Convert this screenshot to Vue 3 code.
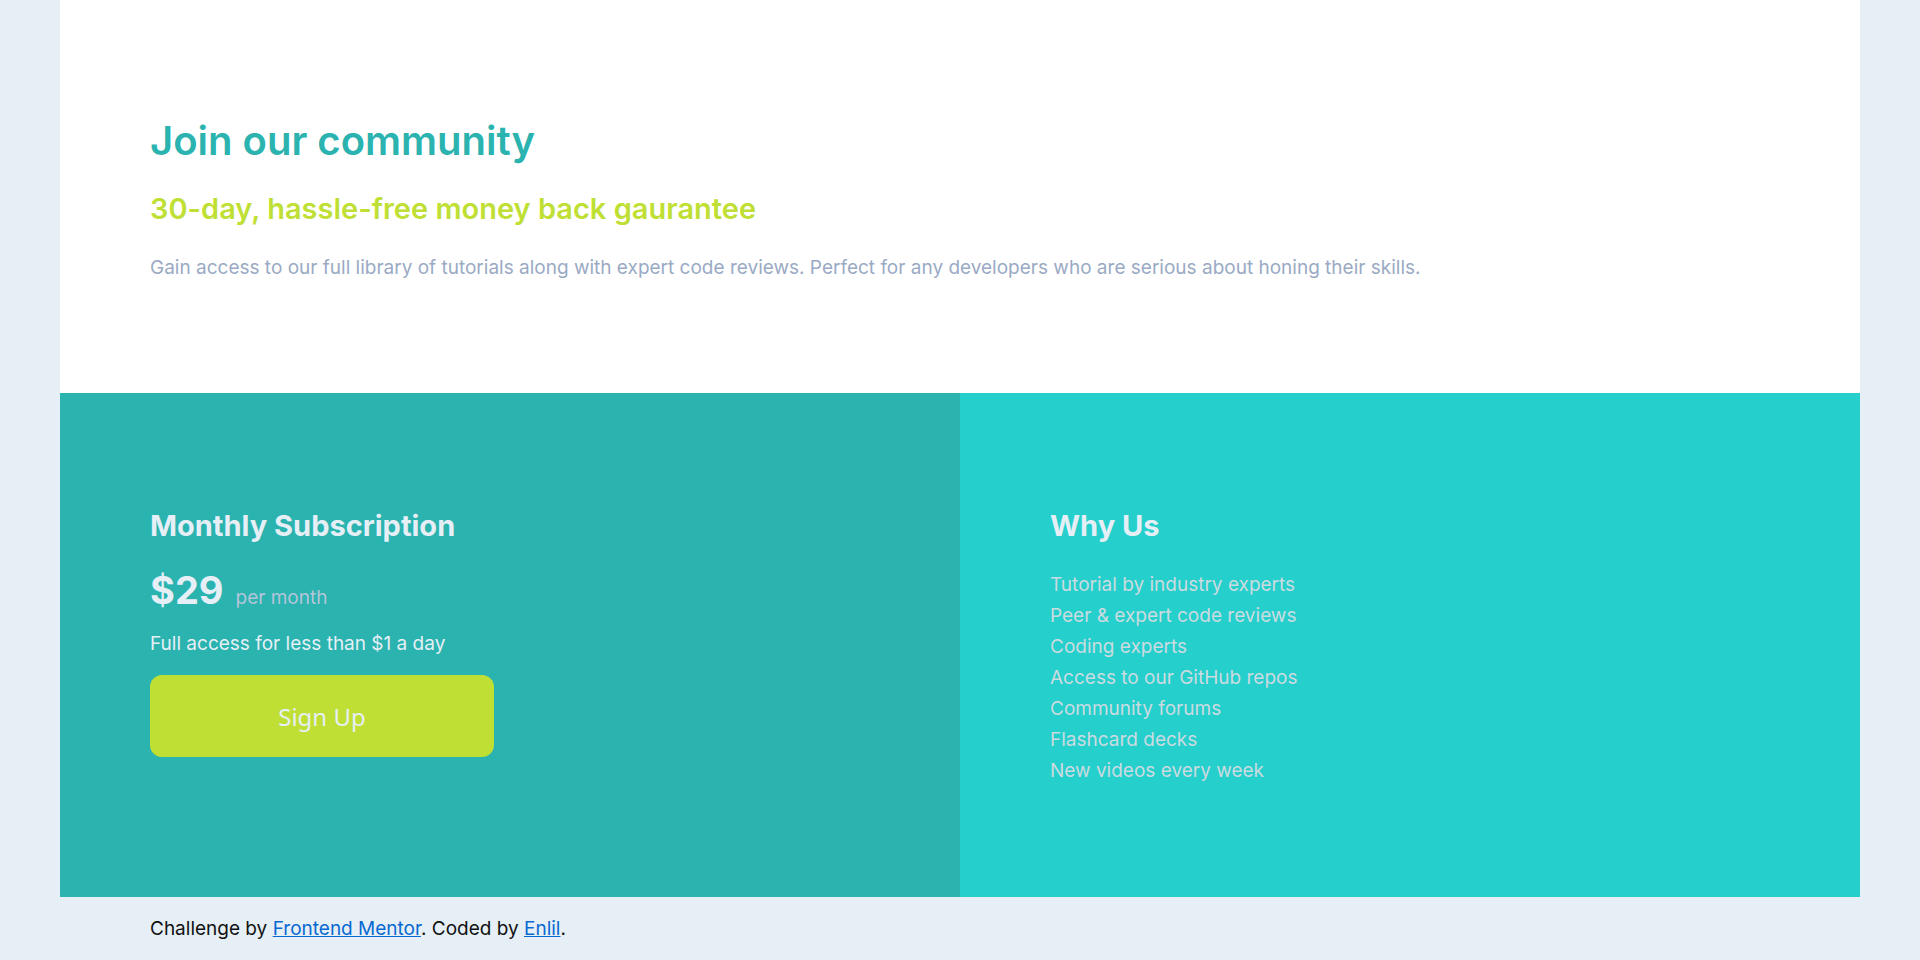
<script setup>
const reasons = [
  'Tutorial by industry experts',
  'Peer & expert code reviews',
  'Coding experts',
  'Access to our GitHub repos',
  'Community forums',
  'Flashcard decks',
  'New videos every week',
]
</script>

<template>
  <div class="page">
    <main>
      <section class="intro">
        <h1>Join our community</h1>
        <h2>30-day, hassle-free money back gaurantee</h2>
        <p>Gain access to our full library of tutorials along with expert code reviews. Perfect for any developers who are serious about honing their skills.</p>
      </section>
      <div class="panels">
        <section class="panel plan">
          <h2>Monthly Subscription</h2>
          <p class="price"><strong>$29</strong><span>per month</span></p>
          <p class="note">Full access for less than $1 a day</p>
          <button type="button">Sign Up</button>
        </section>
        <section class="panel why">
          <h2>Why Us</h2>
          <ul>
            <li v-for="reason in reasons" :key="reason">{{ reason }}</li>
          </ul>
        </section>
      </div>
    </main>
    <footer>
      Challenge by <a href="#frontend-mentor">Frontend Mentor</a>. Coded by <a href="#enlil">Enlil</a>.
    </footer>
  </div>
</template>

<style>
body {
  background: #e6eff5;
}
</style>

<style scoped>
.page {
  padding: 0 60px;
  font-family: Inter, "Liberation Sans", sans-serif;
  font-size: 19px;
  line-height: 31px;
}
h1, h2, p, ul {
  margin: 0;
}
h1 {
  color: #2bb3b0;
  font-size: 40px;
  font-weight: 600;
  line-height: 48px;
}
h2 {
  font-size: 29px;
  font-weight: 600;
  line-height: 40px;
}
.intro {
  padding: 117px 90px 110px;
  background: #fff;
  color: #9aaac4;
}
.intro h2 {
  margin: 24px 0 23px;
  color: #c0df34;
}
.panels {
  display: grid;
  grid-template-columns: 1fr 1fr;
}
.panel {
  padding: 113px 90px 111px;
  color: #e6eff5;
}
.panel h2 {
  font-weight: 700;
}
.plan {
  background: #2bb3b0;
}
.why {
  background: #25cfcc;
}
.price {
  display: flex;
  align-items: baseline;
  gap: 12px;
  margin-top: 20px;
  line-height: 48px;
}
.price strong {
  font-size: 38px;
}
.price span {
  color: #b4c5d9;
}
.note {
  margin-top: 6px;
}
button {
  display: block;
  width: 344px;
  max-width: 100%;
  height: 82px;
  margin-top: 16px;
  border: 0;
  border-radius: 12px;
  background: #c0df34;
  color: #e6eff5;
  font: 24px "Noto Sans", sans-serif;
  cursor: pointer;
}
ul {
  margin-top: 23px;
  padding: 0;
  list-style: none;
  color: #cbdbe0;
}
footer {
  padding: 16px 90px;
  color: #111;
}
a {
  color: #0969d2;
}
</style>
